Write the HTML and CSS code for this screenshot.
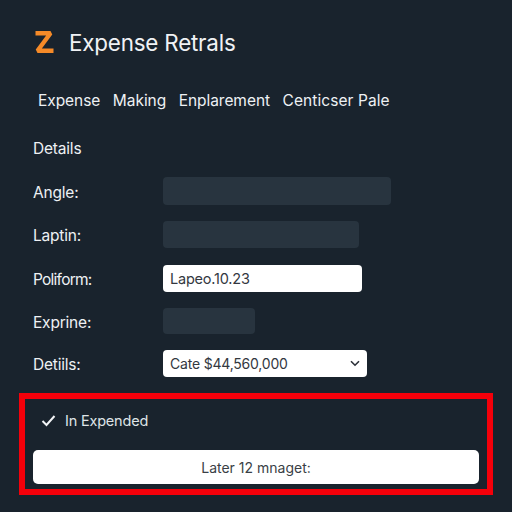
FILE: index.html
```html
<!DOCTYPE html>
<html lang="en">
<head>
<meta charset="utf-8">
<title>Expense Retrals</title>
<link rel="stylesheet" href="styles.css">
</head>
<body>
<main class="page">
  <header class="brand">
    <svg class="logo" width="20" height="24" viewBox="0 0 20 24" aria-hidden="true"><path d="M1.5 2.2H16.5L3.5 19.8H19.5" fill="none" stroke="#f58a28" stroke-width="4.4" stroke-linejoin="bevel"/></svg>
    <h1 class="title">Expense Retrals</h1>
  </header>
  <nav class="tabs">
    <span>Expense</span><span>Making</span><span>Enplarement</span><span class="wide">Centicser Pale</span>
  </nav>
  <h2 class="section">Details</h2>
  <form class="form">
    <div class="row r1"><span class="label">Angle:</span><div class="field dark w1"></div></div>
    <div class="row r2"><span class="label">Laptin:</span><div class="field dark w2"></div></div>
    <div class="row r3"><span class="label narrow">Poliform:</span><div class="field light w3">Lapeo.10.23</div></div>
    <div class="row r4"><span class="label">Exprine:</span><div class="field dark w4"></div></div>
    <div class="row r5"><span class="label">Detiils:</span><div class="field light w5 tight">Cate $44,560,000
      <svg class="chev" width="10" height="7" viewBox="0 0 10 7" aria-hidden="true"><path d="M1 1.2L5 5.2L9 1.2" fill="none" stroke="#2b3038" stroke-width="1.6"/></svg></div></div>
  </form>
  <section class="box">
    <div class="check">
      <svg width="16" height="13" viewBox="0 0 16 13" aria-hidden="true"><path d="M1.5 7L5.5 11L13.5 2" fill="none" stroke="#f2f4f6" stroke-width="2"/></svg>
      <span>In Expended</span>
    </div>
    <button class="action" type="button">Later 12 mnaget:</button>
  </section>
</main>
</body>
</html>
```
FILE: styles.css
```css
* { box-sizing: border-box; }
html, body { margin: 0; height: 100%; }
body { background: #19232d; color: #eef1f4; font-family: Inter, "Liberation Sans", sans-serif; }
.page { width: 512px; height: 512px; padding: 29px 19px 0; overflow: hidden; }
.brand { display: flex; align-items: center; gap: 15px; height: 27px; padding-left: 15px; }
.logo { flex: none; }
.title { margin: 0; font-size: 22.4px; font-weight: 400; letter-spacing: -0.2px; color: #f0f2f5; }
.tabs { display: flex; gap: 12.5px; margin-top: 35px; padding-left: 19px; font-size: 15.5px; line-height: 20px; letter-spacing: -0.05px; }
.wide { letter-spacing: 0.08px; }
.section { margin: 28px 0 0 14px; font-size: 15.5px; line-height: 20px; font-weight: 400; letter-spacing: -0.2px; }
.form { display: flex; flex-direction: column; margin: 18px 0 0 14px; }
.row { display: flex; align-items: center; }
.r2 { margin-top: 16px; }
.r3 { margin-top: 17px; }
.r4 { margin-top: 16px; }
.r5 { margin-top: 16px; }
.label { width: 130px; flex: none; padding-top: 2px; font-size: 15.5px; letter-spacing: -0.2px; }
.narrow { letter-spacing: -0.75px; }
.field { height: 27px; border-radius: 4px; display: flex; align-items: center; justify-content: space-between; padding: 0 7px; font-size: 14.5px; letter-spacing: -0.2px; }
.tight { font-size: 14px; }
.dark { background: #28343f; }
.light { background: #fff; color: #33383f; }
.w1 { width: 228px; height: 28px; }
.w2 { width: 196px; }
.w3 { width: 199px; }
.w4 { width: 92px; height: 26px; }
.w5 { width: 204px; }
.box { margin: 16px 0 0; width: 474px; height: 102px; border: 6px solid #f5000a; padding: 7px 8px 0; }
.check { display: flex; align-items: center; gap: 8px; height: 28px; padding-left: 8px; font-size: 14.5px; letter-spacing: -0.2px; color: #dfe3e7; }
.action { display: block; width: 446px; height: 34px; margin-top: 16px; border: 0; border-radius: 5px; background: #fff; color: #3a3f46; font: 400 14px Inter, "Liberation Sans", sans-serif; }
```
